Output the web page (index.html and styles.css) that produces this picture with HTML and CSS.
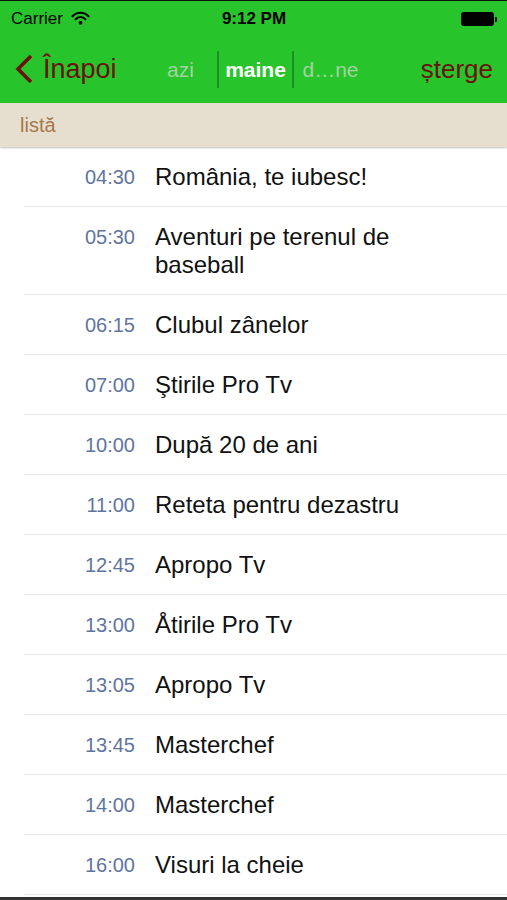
FILE: index.html
```html
<!DOCTYPE html>
<html>
  <head>
    <title>Program TV</title>
    <link rel="stylesheet" href="styles.css">
  </head>
  <body>
    <div class="screen">
      <div class="status-bar">
        <div class="carrier">
          Carrier
          <svg class="wifi" width="19" height="14" viewBox="0 0 19 14">
            <path d="M1.5 5.2 A11 11 0 0 1 17.5 5.2" fill="none" stroke="#000" stroke-width="2.2" stroke-linecap="round"/>
            <path d="M4.6 8.2 A6.6 6.6 0 0 1 14.4 8.2" fill="none" stroke="#000" stroke-width="2.2" stroke-linecap="round"/>
            <circle cx="9.5" cy="11.8" r="1.9" fill="#000"/>
          </svg>
        </div>
        <div class="clock">9:12 PM</div>
        <div class="battery">
          <div class="battery-body"></div>
          <div class="battery-nub"></div>
        </div>
      </div>

      <div class="nav-bar">
        <a class="back" href="#">
          <svg width="20" height="30" viewBox="0 0 20 30">
            <path d="M17 2 L4 15 L17 28" fill="none" stroke="#6a1208" stroke-width="3.6"/>
          </svg>
          Înapoi
        </a>
        <div class="segments">
          <span class="segment">azi</span>
          <span class="segment active">maine</span>
          <span class="segment">d…ne</span>
        </div>
        <a class="action" href="#">șterge</a>
      </div>

      <div class="section-header">listă</div>

      <ul class="schedule">
        <li class="show"><span class="time">04:30</span><span class="title">România, te iubesc!</span></li>
        <li class="show"><span class="time">05:30</span><span class="title">Aventuri pe terenul de baseball</span></li>
        <li class="show"><span class="time">06:15</span><span class="title">Clubul zânelor</span></li>
        <li class="show"><span class="time">07:00</span><span class="title">Ştirile Pro Tv</span></li>
        <li class="show"><span class="time">10:00</span><span class="title">După 20 de ani</span></li>
        <li class="show"><span class="time">11:00</span><span class="title">Reteta pentru dezastru</span></li>
        <li class="show"><span class="time">12:45</span><span class="title">Apropo Tv</span></li>
        <li class="show"><span class="time">13:00</span><span class="title">Åtirile Pro Tv</span></li>
        <li class="show"><span class="time">13:05</span><span class="title">Apropo Tv</span></li>
        <li class="show"><span class="time">13:45</span><span class="title">Masterchef</span></li>
        <li class="show"><span class="time">14:00</span><span class="title">Masterchef</span></li>
        <li class="show"><span class="time">16:00</span><span class="title">Visuri la cheie</span></li>
      </ul>
    </div>
  </body>
</html>
```

FILE: styles.css
```css
body {
  margin: 0;
  font-family: "Liberation Sans", Arial, sans-serif;
  background-color: #fff;
  color: #000;
}

.screen {
  height: 900px;
  box-sizing: border-box;
  border-top: 1px solid #111;
  border-bottom: 3px solid #333;
  overflow: hidden;
  display: flex;
  flex-direction: column;
}

.status-bar {
  background-color: #28c42c;
  height: 36px;
  display: flex;
  align-items: center;
  justify-content: space-between;
  padding: 0 10px 0 11px;
  font-size: 17px;
  flex-shrink: 0;
}

.carrier {
  display: flex;
  align-items: center;
  gap: 8px;
  width: 120px;
}

.wifi {
  margin-top: -2px;
}

.clock {
  font-weight: bold;
}

.battery {
  width: 120px;
  display: flex;
  justify-content: flex-end;
  align-items: center;
}

.battery-body {
  width: 33px;
  height: 14px;
  background-color: #000;
  border-radius: 3px;
}

.battery-nub {
  width: 2px;
  height: 5px;
  background-color: #000;
  margin-left: 1px;
  border-radius: 0 1px 1px 0;
}

.nav-bar {
  background-color: #28c42c;
  height: 66px;
  display: flex;
  align-items: center;
  padding: 0 14px 2px 14px;
  box-sizing: border-box;
  flex-shrink: 0;
}

.back,
.action {
  color: #6a1208;
  font-size: 26px;
  text-decoration: none;
}

.back {
  display: flex;
  align-items: center;
  gap: 9px;
  width: 130px;
  font-size: 27px;
}

.action {
  margin-left: auto;
}

.segments {
  display: flex;
  align-items: center;
}

.segment {
  width: 73px;
  text-align: center;
  font-size: 21px;
  color: #a3d3a0;
  line-height: 37px;
}

.segment.active {
  color: #fff;
  font-weight: bold;
  border-left: 2px solid #1c8f20;
  border-right: 2px solid #1c8f20;
}

.section-header {
  background-color: #e6dfcf;
  color: #a8774c;
  font-size: 20px;
  height: 44px;
  line-height: 44px;
  padding-left: 20px;
  box-shadow: 0 1px 2px rgba(0, 0, 0, 0.25);
  position: relative;
  flex-shrink: 0;
}

.schedule {
  list-style: none;
  margin: 0;
  padding: 0 0 0 24px;
}

.show {
  display: flex;
  align-items: flex-start;
  gap: 20px;
  padding: 16px 36px 15px 0;
  border-bottom: 1px solid #e8e8e8;
}

.time {
  flex: 0 0 111px;
  text-align: right;
  font-size: 20px;
  line-height: 28px;
  color: #5f74a0;
}

.title {
  font-size: 24px;
  line-height: 28px;
  color: #111;
}
```
